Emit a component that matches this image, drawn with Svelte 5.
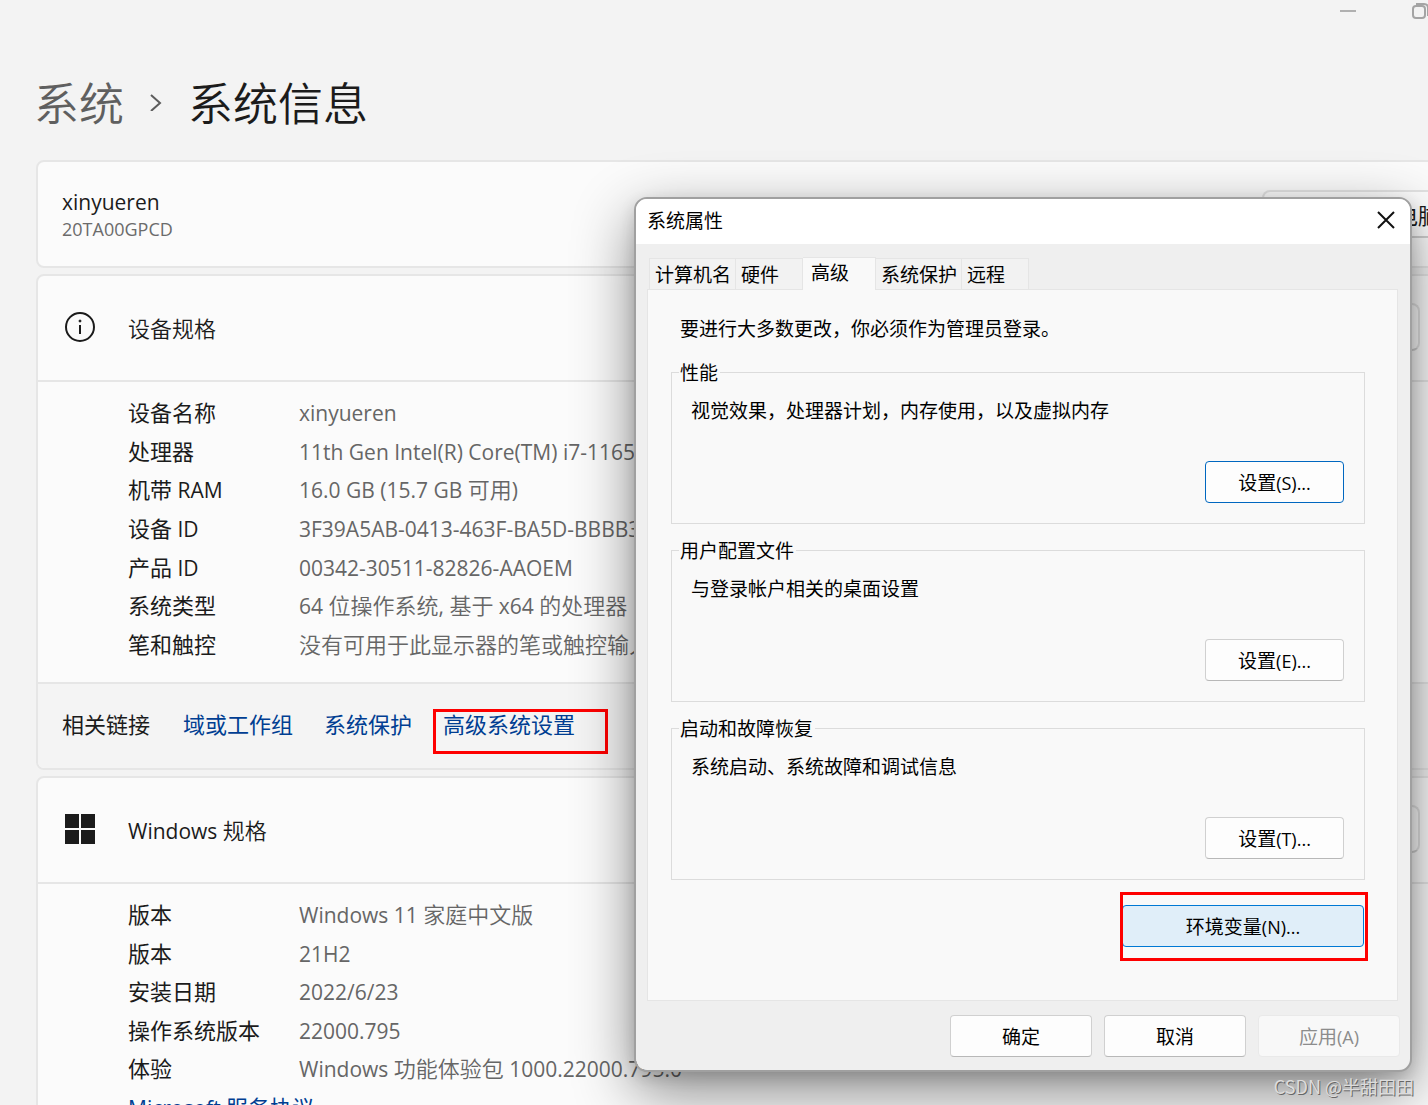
<script lang="ts">
    type Spec = {
        label: string,
        value: string
    }

    const deviceSpecs: Array<Spec> = [
        { label: "设备名称", value: "xinyueren" },
        { label: "处理器", value: "11th Gen Intel(R) Core(TM) i7-1165G7" },
        { label: "机带 RAM", value: "16.0 GB (15.7 GB 可用)" },
        { label: "设备 ID", value: "3F39A5AB-0413-463F-BA5D-BBBB3" },
        { label: "产品 ID", value: "00342-30511-82826-AAOEM" },
        { label: "系统类型", value: "64 位操作系统, 基于 x64 的处理器" },
        { label: "笔和触控", value: "没有可用于此显示器的笔或触控输入" },
    ]

    const windowsSpecs: Array<Spec> = [
        { label: "版本", value: "Windows 11 家庭中文版" },
        { label: "版本", value: "21H2" },
        { label: "安装日期", value: "2022/6/23" },
        { label: "操作系统版本", value: "22000.795" },
        { label: "体验", value: "Windows 功能体验包 1000.22000.795.0" },
    ]

    const links = [
        { text: "域或工作组", marked: false },
        { text: "系统保护", marked: false },
        { text: "高级系统设置", marked: true },
    ]

    const tabs = ["计算机名", "硬件", "高级", "系统保护", "远程"]
    let activeTab = $state("高级")

    const groups = [
        { title: "性能", text: "视觉效果，处理器计划，内存使用，以及虚拟内存", button: "设置(S)...", focused: true },
        { title: "用户配置文件", text: "与登录帐户相关的桌面设置", button: "设置(E)...", focused: false },
        { title: "启动和故障恢复", text: "系统启动、系统故障和调试信息", button: "设置(T)...", focused: false },
    ]

    // Splits a text into its latin and its chinese runs
    function runs(text: string) {
        return text.match(/[\x20-\x7e]+|[^\x20-\x7e]+/g) ?? []
    }
</script>

{#snippet mixed(text: string)}{#each runs(text) as run}<span class:latin={/^[\x20-\x7e]/.test(run)}>{run}</span>{/each}{/snippet}

{#snippet copyButton()}
    <div class="copy">
        <button class="settingsButton">复制</button>
        <svg width="16" height="10" viewBox="0 0 16 10" fill="none" stroke="#444" stroke-width="2"><path d="M1 9 8 2l7 7" /></svg>
    </div>
{/snippet}

<div class="page">
    <header class="windowControls">
        <button aria-label="最小化">
            <svg width="18" height="22" viewBox="0 0 18 22" stroke="#b0b0b0" stroke-width="2"><path d="M1 11h16" /></svg>
        </button>
        <button aria-label="还原">
            <svg width="18" height="22" viewBox="0 0 18 22" fill="none" stroke="#a4a4a4" stroke-width="2">
                <rect x="2" y="6" width="12" height="12" rx="3" />
                <path d="M5 4h8q4 0 4 4v8" />
            </svg>
        </button>
    </header>

    <main>
        <h1>
            <a href="#system">系统</a>
            <svg width="12" height="18" viewBox="0 0 12 18" fill="none" stroke="#5c5c5c" stroke-width="2"><path d="M1 2l9 8-9 8" /></svg>
            <span>系统信息</span>
        </h1>

        <section class="card nameCard">
            <div>
                <div class="name">{@render mixed("xinyueren")}</div>
                <div class="model">{@render mixed("20TA00GPCD")}</div>
            </div>
            <button class="settingsButton">重命名这台电脑</button>
        </section>

        <section class="card">
            <div class="cardHeader">
                <svg width="32" height="32" viewBox="0 0 32 32" fill="none" stroke="#1b1b1b" stroke-width="2">
                    <circle cx="16" cy="16" r="14" />
                    <path d="M16 14v9" />
                    <circle cx="16" cy="10" r="1" fill="#1b1b1b" stroke-width="1" />
                </svg>
                <h2>设备规格</h2>
                {@render copyButton()}
            </div>
            <dl class="device">
                {#each deviceSpecs as spec}
                    <div class="row"><dt>{@render mixed(spec.label)}</dt><dd>{@render mixed(spec.value)}</dd></div>
                {/each}
            </dl>
            <nav>
                <span>相关链接</span>
                {#each links as link}
                    <a href="#settings" class:marked={link.marked}>{link.text}</a>
                {/each}
            </nav>
        </section>

        <section class="card">
            <div class="cardHeader">
                <svg width="32" height="32" viewBox="0 0 32 32" fill="#1b1b1b">
                    <path d="M1 1h14v14H1zM17 1h14v14H17zM1 17h14v14H1zM17 17h14v14H17z" />
                </svg>
                <h2>{@render mixed("Windows 规格")}</h2>
                {@render copyButton()}
            </div>
            <dl class="windows">
                {#each windowsSpecs as spec}
                    <div class="row"><dt>{spec.label}</dt><dd>{@render mixed(spec.value)}</dd></div>
                {/each}
                <div class="row"><dt><a href="#services">{@render mixed("Microsoft 服务协议")}</a></dt></div>
            </dl>
        </section>
    </main>

    <div class="dialog" role="dialog" aria-labelledby="dialogTitle">
        <div class="titleBar">
            <span id="dialogTitle">系统属性</span>
            <button aria-label="关闭">
                <svg width="18" height="18" viewBox="0 0 18 18" fill="none" stroke="#111" stroke-width="2"><path d="M1 1l16 16M17 1 1 17" /></svg>
            </button>
        </div>

        <div class="tabs" role="tablist">
            {#each tabs as tab}
                <button role="tab" aria-selected={tab == activeTab} class:active={tab == activeTab} onclick={() => activeTab = tab}>{tab}</button>
            {/each}
        </div>

        <div class="panel" role="tabpanel">
            <p>要进行大多数更改，你必须作为管理员登录。</p>
            {#each groups as group}
                <fieldset>
                    <legend>{group.title}</legend>
                    <p>{group.text}</p>
                    <button class="button" class:focused={group.focused}>{@render mixed(group.button)}</button>
                </fieldset>
            {/each}
            <div class="environment marked">
                <button class="button hovered">{@render mixed("环境变量(N)...")}</button>
            </div>
        </div>

        <div class="actions">
            <button class="button">确定</button>
            <button class="button">取消</button>
            <button class="button" disabled>{@render mixed("应用(A)")}</button>
        </div>
    </div>

    <div class="watermark">CSDN @半甜田田</div>
</div>

<style>
    :global(body) {
        margin: 0;
        overflow: hidden;
    }
    .page {
        position: relative;
        box-sizing: border-box;
        height: 100vh;
        overflow: hidden;
        background-color: #f3f3f3;
        color: #1b1b1b;
        font-family: "Noto Sans CJK SC", sans-serif;
        font-size: 22px;
        line-height: 32px;
    }
    .latin {
        font-family: "Open Sans", "Noto Sans", sans-serif;
        font-size: 21px;
        font-weight: 400;
        line-height: 26px;
        white-space: pre;
    }
    .model .latin, .dialog .latin {
        font-size: 18px;
        line-height: 20px;
    }
    button {
        font: inherit;
        color: inherit;
        padding: 0;
        border: none;
        background: none;
        white-space: nowrap;
    }
    svg {
        display: block;
        flex: none;
    }
    a {
        color: #003e92;
        text-decoration: none;
    }
    p {
        margin: 0;
    }
    .windowControls {
        display: flex;
        justify-content: flex-end;
        gap: 54px;
        height: 22px;
        margin-right: -1px;
    }
    /* The settings window runs past the right edge of the screen */
    main {
        margin: 0 -60px 0 36px;
    }
    h1 {
        display: flex;
        align-items: center;
        gap: 26px;
        height: 138px;
        box-sizing: border-box;
        padding-top: 22px;
        margin: 0 0 0 -2px;
        font-size: 45px;
        font-weight: 350;
        line-height: 64px;
    }
    h1 a {
        color: #5f5f5f;
    }
    .card {
        border: 2px solid #e6e6e6;
        border-radius: 8px;
        background-color: #fbfbfb;
        margin-bottom: 6px;
        overflow: hidden;
    }
    .nameCard {
        display: flex;
        align-items: center;
        justify-content: space-between;
        box-sizing: border-box;
        height: 108px;
        padding: 0 22px 0 24px;
    }
    .name {
        line-height: 27px;
    }
    .model {
        color: #6b6b6b;
        font-size: 19px;
        line-height: 26px;
    }
    .settingsButton {
        height: 48px;
        padding: 0 22px;
        border: 2px solid #e3e3e3;
        border-bottom-color: #cfcfcf;
        border-radius: 8px;
        background-color: #fdfdfd;
    }
    .cardHeader {
        display: flex;
        align-items: center;
        height: 101px;
        padding: 0 24px 3px 26px;
        border-bottom: 2px solid #e6e6e6;
    }
    h2 {
        margin: 0 0 0 32px;
        font-size: 22px;
        font-weight: 350;
    }
    .copy {
        display: flex;
        align-items: center;
        gap: 26px;
        margin-left: auto;
    }
    dl {
        display: grid;
        grid-auto-rows: 1fr;
        box-sizing: border-box;
        margin: 0;
        padding: 10px 0 20px 90px;
    }
    .device {
        height: 300px;
    }
    .windows {
        height: 261px;
    }
    .row {
        display: grid;
        grid-template-columns: 171px 1fr;
        align-items: center;
        white-space: nowrap;
    }
    dd {
        margin: 0;
        color: #666;
        font-weight: 350;
    }
    nav {
        display: flex;
        align-items: center;
        gap: 31px;
        height: 78px;
        padding: 0 0 6px 24px;
        border-top: 2px solid #e6e6e6;
        background-color: #f4f4f4;
    }
    nav span {
        margin-right: 2px;
    }
    .marked {
        position: relative;
    }
    .marked::after {
        content: "";
        position: absolute;
        inset: 2px -33px -15px -10px;
        border: 3px solid #fe0000;
    }
    .dialog {
        position: absolute;
        top: 197px;
        right: 16px;
        width: 774px;
        border: 2px solid #a0a0a0;
        border-radius: 13px;
        background-color: #efefef;
        background-clip: padding-box;
        box-shadow: 0 20px 60px rgba(0, 0, 0, 0.46), 0 6px 16px rgba(0, 0, 0, 0.14);
        color: #000;
        font-size: 19px;
        line-height: 26px;
    }
    .titleBar {
        display: flex;
        align-items: center;
        justify-content: space-between;
        height: 42px;
        padding: 0 15px 3px 11px;
        border-radius: 11px 11px 0 0;
        background-color: #fff;
    }
    .tabs {
        display: flex;
        align-items: flex-end;
        height: 45px;
        padding-left: 13px;
    }
    .tabs button {
        height: 31px;
        min-width: 67px;
        padding: 0 4px 0 5px;
        border: 1px solid #e5e5e5;
        border-width: 1px 1px 0 0;
        background-color: #f2f2f2;
        text-align: left;
    }
    .tabs button:first-child {
        border-left-width: 1px;
    }
    .tabs .active {
        position: relative;
        height: 33px;
        min-width: 73px;
        padding: 0 8px 5px;
        margin-bottom: -1px;
        background-color: #f9f9f9;
    }
    .panel {
        margin: 0 12px 0 11px;
        padding: 25px 32px 53px 23px;
        border: 1px solid #e5e5e5;
        background-color: #f9f9f9;
    }
    .panel > p {
        padding-left: 9px;
        margin-bottom: 18px;
    }
    fieldset {
        display: flex;
        flex-direction: column;
        box-sizing: border-box;
        height: 165px;
        min-width: 0;
        margin: 0 0 13px;
        padding: 12px 20px 20px 19px;
        border: 1px solid #dcdcdc;
    }
    legend {
        margin-left: -12px;
        padding: 0 2px 0 1px;
    }
    .button {
        box-sizing: border-box;
        width: 142px;
        height: 42px;
        border: 1px solid #d0d0d0;
        border-bottom-color: #b8b8b8;
        border-radius: 4px;
        background-color: #fdfdfd;
    }
    .button:disabled {
        border-color: #e9e9e9;
        background-color: #f8f8f8;
        color: #8c8c8c;
    }
    fieldset .button {
        width: 139px;
        margin: auto 0 0 auto;
    }
    .button.focused {
        border-color: #0067c0;
    }
    .button.hovered {
        display: block;
        width: 100%;
        border-color: #0078d4;
        background-color: #e0eef9;
    }
    .environment {
        width: 242px;
        margin: 25px 1px 0 auto;
    }
    .environment::after {
        inset: -13px -4px -14px -2px;
    }
    .actions {
        display: flex;
        justify-content: flex-end;
        gap: 12px;
        padding: 14px 10px 13px;
    }
    .watermark {
        position: absolute;
        right: 14px;
        bottom: 4px;
        color: #dcdcdc;
        font-size: 18px;
        line-height: 30px;
        text-shadow: 1px 1px 0 #666;
    }
</style>
